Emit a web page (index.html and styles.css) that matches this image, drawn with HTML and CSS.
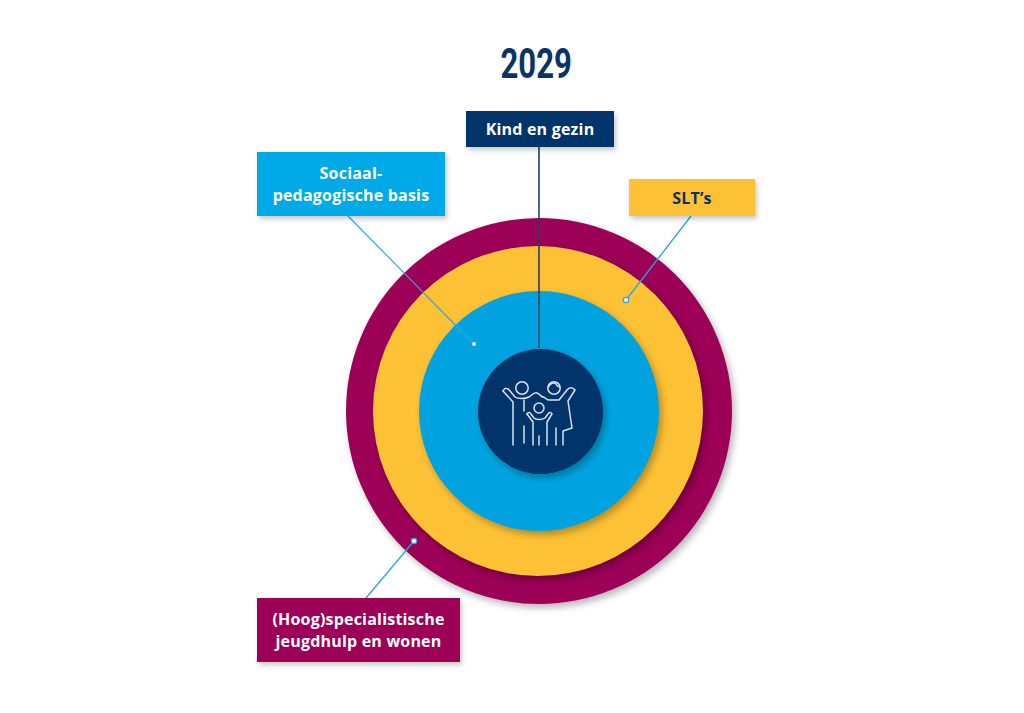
FILE: index.html
```html
<!DOCTYPE html>
<html lang="nl">
<head>
<meta charset="utf-8">
<title>2029</title>
<link rel="stylesheet" href="styles.css">
</head>
<body>
<div class="stage">
  <h1 class="year"><span>2029</span></h1>

  <div class="rings">
    <div class="ring ring-outer">
      <div class="ring ring-mid">
        <div class="ring ring-inner">
          <div class="ring ring-core">
            <svg class="family" viewBox="0 0 80 78" width="80" height="78" aria-hidden="true">
              <g fill="none" stroke="#d9e1ec" stroke-width="1.5" stroke-linecap="round" stroke-linejoin="round">
                <!-- father -->
                <circle cx="23" cy="15" r="6.2"/>
                <path d="M4 18 L14 29 L14 72"/>
                <path d="M4 18 C6 14 9 15 11 18 L16 24 C19 26 26 26 30 24 C33 22 35 19 38 20 C41 21 42 24 44 24"/>
                <path d="M25 27 L25 38"/>
                <path d="M25 53 L25 70"/>
                <!-- child -->
                <circle cx="40" cy="35" r="5"/>
                <path d="M28 41 C29 39 31 39 32 41 L35 45 C37 47 43 47 46 45 L49 41 C50 39 52 39 53 41 L48 49 L48 72"/>
                <path d="M28 41 L34 49 L34 72"/>
                <path d="M40 63 L40 72"/>
                <!-- mother -->
                <circle cx="55" cy="15" r="6.2"/>
                <path d="M49.5 14 C51 10 55 9 57 11 C58 13 60 14 61 14"/>
                <path d="M44 24 C46 24 47 27 50 27 L60 27 L68 17 C70 14 74 14 76 17 L69 28 L73 55 L64 58 L64 72"/>
                <path d="M57 55 L57 72"/>
              </g>
            </svg>
          </div>
        </div>
      </div>
    </div>
  </div>

  <svg class="connectors" viewBox="0 0 1024 713" width="1024" height="713" aria-hidden="true">
    <line x1="539" y1="147" x2="539" y2="348" stroke="#1e3f6d" stroke-width="1.6"/>
    <line x1="348" y1="216" x2="474" y2="344" stroke="#22a9e1" stroke-width="1.1"/>
    <circle cx="474" cy="344" r="1.9" fill="#ffffff"/>
    <line x1="691" y1="216" x2="626" y2="300" stroke="#22a9e1" stroke-width="1.3"/>
    <circle cx="626" cy="300" r="2.7" fill="#ffffff" stroke="#22a9e1" stroke-width="1.2"/>
    <line x1="366" y1="598" x2="414" y2="541" stroke="#22a9e1" stroke-width="1.3"/>
    <circle cx="414" cy="541" r="2.7" fill="#ffffff" stroke="#22a9e1" stroke-width="1.2"/>
  </svg>

  <div class="label label-kind">Kind en gezin</div>
  <div class="label label-basis">Sociaal-<br>pedagogische basis</div>
  <div class="label label-slt">SLT’s</div>
  <div class="label label-hoog">(Hoog)specialistische<br>jeugdhulp en wonen</div>
</div>
</body>
</html>
```

FILE: styles.css
```css
html, body {
  margin: 0;
  padding: 0;
  background: #ffffff;
}

.stage {
  position: relative;
  width: 1024px;
  height: 713px;
  overflow: hidden;
  font-family: Roboto, "Liberation Sans", Arial, sans-serif;
}

.year {
  margin: 0;
  padding-top: 43px;
  padding-left: 48px;
  text-align: center;
  font-size: 42px;
  line-height: 42px;
  font-weight: 700;
  color: #0b3466;
}

.year span {
  display: inline-block;
  transform: scaleX(0.74);
}

.rings {
  position: absolute;
  left: 346px;
  top: 218px;
}

.ring {
  display: flex;
  align-items: center;
  justify-content: center;
  border-radius: 50%;
  box-shadow: 3px 4px 7px rgba(0, 0, 0, 0.28);
}

.ring-outer {
  width: 386px;
  height: 386px;
  background: #9c0057;
}

.ring-mid {
  width: 330px;
  height: 330px;
  background: #fcc134;
  margin-left: -2px;
}

.ring-inner {
  width: 240px;
  height: 240px;
  background: #00a3e0;
  margin-left: 2px;
}

.ring-core {
  width: 125px;
  height: 125px;
  background: #00346a;
  margin-left: 2px;
}

.family {
  display: block;
  margin-left: -3px;
  margin-top: 1px;
}

.connectors {
  position: absolute;
  left: 0;
  top: 0;
}

.label {
  position: absolute;
  display: flex;
  align-items: center;
  justify-content: center;
  text-align: center;
  color: #ffffff;
  font-family: "Open Sans", Roboto, "Liberation Sans", sans-serif;
  font-weight: 700;
  font-size: 16px;
  line-height: 22px;
  letter-spacing: 0.2px;
  box-shadow: 2px 3px 5px rgba(0, 0, 0, 0.22);
}

.label-kind {
  left: 466px;
  top: 111px;
  width: 148px;
  height: 36px;
  background: #00346a;
}

.label-basis {
  left: 257px;
  top: 152px;
  width: 188px;
  height: 64px;
  background: #00a9e8;
}

.label-slt {
  left: 629px;
  top: 179px;
  width: 126px;
  height: 37px;
  background: #fcc134;
  color: #0b3466;
}

.label-hoog {
  left: 257px;
  top: 598px;
  width: 203px;
  height: 64px;
  background: #9c0057;
}
```
